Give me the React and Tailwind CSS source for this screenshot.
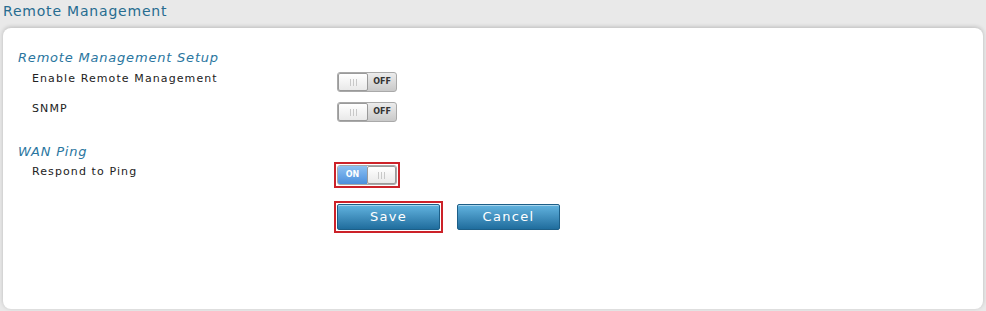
import React from 'react';

const font = { fontFamily: '"DejaVu Sans", "Liberation Sans", sans-serif' };

const Grip = () => (
    <div className="flex gap-[2px]">
        <span className="w-px h-[7px] bg-[#c8c8c8]"></span>
        <span className="w-px h-[7px] bg-[#c8c8c8]"></span>
        <span className="w-px h-[7px] bg-[#c8c8c8]"></span>
    </div>
);

const Toggle = ({ on }) => (
    <div className="flex w-[60px] h-[20px] rounded-[3px] border border-[#a9a9a9] overflow-hidden bg-gradient-to-b from-[#ececec] to-[#c9c9c9]">
        {on ? (
            <>
                <div className="flex-1 flex items-center justify-center bg-gradient-to-b from-[#8cc0f2] to-[#4b8fdc] text-white text-[8px] font-bold">ON</div>
                <div className="w-[29px] flex items-center justify-center rounded-[2px] border border-[#9a9a9a] bg-gradient-to-b from-[#ffffff] to-[#e9e9e9]">
                    <Grip />
                </div>
            </>
        ) : (
            <>
                <div className="w-[30px] flex items-center justify-center rounded-[2px] border border-[#9a9a9a] bg-gradient-to-b from-[#ffffff] to-[#e9e9e9]">
                    <Grip />
                </div>
                <div className="flex-1 flex items-center justify-center text-[#333] text-[8px] font-bold">OFF</div>
            </>
        )}
    </div>
);

const Row = ({ label, children }) => (
    <div className="flex h-[30px]">
        <div className="w-[319px] pl-[14px] pt-[5px] text-[11px] tracking-[1.1px] text-[#222]">{label}</div>
        <div className="pt-[6px]">{children}</div>
    </div>
);

const Highlight = ({ children }) => (
    <div className="border-2 border-[#cc2229] p-px">{children}</div>
);

const Button = ({ children }) => (
    <button className="w-[103px] h-[26px] rounded-[2px] border border-[#1d5f88] bg-gradient-to-b from-[#62b4e0] to-[#1f6d9d] text-white text-[13px] tracking-[1.3px] shadow-[inset_0_1px_0_rgba(255,255,255,0.45)]" style={font}>
        {children}
    </button>
);

export default function App() {
    return (
        <div className="w-[986px] h-[311px] bg-[#e9e9e9] px-[3px] overflow-hidden" style={font}>
            <div className="h-[28px] pt-[1px] text-[14px] tracking-[0.8px] text-[#276c90]">Remote Management</div>
            <div className="h-[281px] rounded-[8px] bg-white shadow-[0_-1px_4px_rgba(0,0,0,0.2)] pl-[15px] pt-[20px]">
                <div className="h-[18px] italic text-[13px] tracking-[0.8px] text-[#2a76a0]">Remote Management Setup</div>
                <Row label="Enable Remote Management"><Toggle on={false} /></Row>
                <Row label="SNMP"><Toggle on={false} /></Row>
                <div className="h-[16px]"></div>
                <div className="h-[18px] italic text-[13px] tracking-[0.8px] text-[#2a76a0]">WAN Ping</div>
                <div className="flex h-[30px]">
                    <div className="w-[316px] pl-[14px] pt-[4px] text-[11px] tracking-[1.1px] text-[#222]">Respond to Ping</div>
                    <div className="pt-[2px]"><Highlight><Toggle on={true} /></Highlight></div>
                </div>
                <div className="flex gap-[14px] pl-[316px] pt-[11px]">
                    <Highlight><Button>Save</Button></Highlight>
                    <div className="pt-[3px]"><Button>Cancel</Button></div>
                </div>
            </div>
        </div>
    );
}
